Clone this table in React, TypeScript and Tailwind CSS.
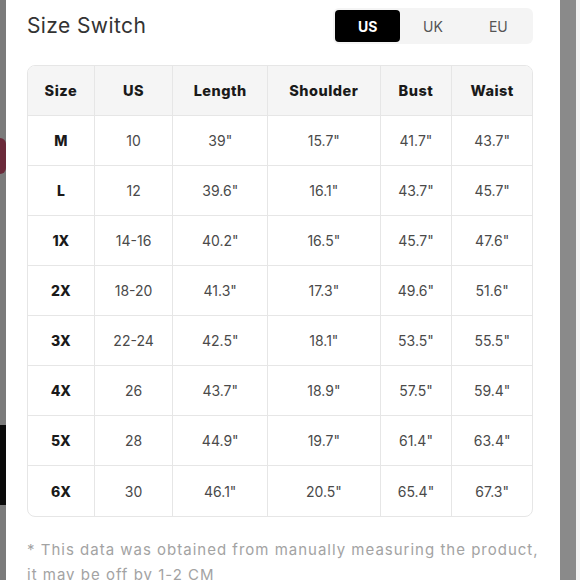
import React from 'react';

const headers = ['Size', 'US', 'Length', 'Shoulder', 'Bust', 'Waist'];

const rows = [
  ['M', '10', '39"', '15.7"', '41.7"', '43.7"'],
  ['L', '12', '39.6"', '16.1"', '43.7"', '45.7"'],
  ['1X', '14-16', '40.2"', '16.5"', '45.7"', '47.6"'],
  ['2X', '18-20', '41.3"', '17.3"', '49.6"', '51.6"'],
  ['3X', '22-24', '42.5"', '18.1"', '53.5"', '55.5"'],
  ['4X', '26', '43.7"', '18.9"', '57.5"', '59.4"'],
  ['5X', '28', '44.9"', '19.7"', '61.4"', '63.4"'],
  ['6X', '30', '46.1"', '20.5"', '65.4"', '67.3"'],
];

const colWidths = ['w-[67px]', 'w-[79px]', 'w-[95px]', 'w-[113px]', 'w-[72px]', 'w-[80px]'];

const UnitToggle: React.FC = () => {
  const units = ['US', 'UK', 'EU'];
  return (
    <div className="flex items-center bg-[#f4f4f4] rounded-md p-[2px] h-[36px] w-[200px]">
      {units.map((u, i) => (
        <button
          key={u}
          className={`flex-1 h-full rounded-[4px] text-[14px] ${
            i === 0 ? 'bg-black text-white font-bold' : 'text-[#555]'
          }`}
        >
          {u}
        </button>
      ))}
    </div>
  );
};

export default function App() {
  return (
    <div
      className="w-[580px] h-[580px] overflow-hidden flex bg-white"
      style={{ fontFamily: 'Inter, "Noto Sans", sans-serif' }}
    >
      {/* page behind the sheet */}
      <div className="w-[6px] shrink-0 flex flex-col bg-[#7b7b7b]">
        <div className="h-[138px]" />
        <div className="h-[36px] bg-[#6b2a3a] rounded-r-full" />
        <div className="h-[251px]" />
        <div className="h-[80px] bg-[#0a0a0a]" />
        <div className="flex-1" />
      </div>

      {/* sheet */}
      <div className="w-[554px] shrink-0 pl-[21px] pt-[8px]">
        <div className="w-[506px] flex items-center justify-between">
          <h2 className="text-[21px] text-[#333] tracking-[0.4px]">Size Switch</h2>
          <UnitToggle />
        </div>

        <div className="mt-[21px] w-[506px] border border-[#e6e6e6] rounded-lg overflow-hidden">
          <div className="flex h-[50px] bg-[#f5f5f5] border-b border-[#e6e6e6]">
            {headers.map((h, i) => (
              <div
                key={h}
                className={`${colWidths[i]} flex items-center justify-center text-[14.5px] tracking-[0.5px] font-extrabold text-[#1a1a1a] ${
                  i < 5 ? 'border-r border-[#e6e6e6]' : ''
                }`}
              >
                {h}
              </div>
            ))}
          </div>
          {rows.map((r, ri) => (
            <div
              key={r[0]}
              className={`flex h-[50px] ${ri < rows.length - 1 ? 'border-b border-[#e6e6e6]' : ''}`}
            >
              {r.map((c, ci) => (
                <div
                  key={ci}
                  className={`${colWidths[ci]} flex items-center justify-center text-[14px] ${
                    ci === 0 ? 'font-extrabold text-[#1a1a1a]' : 'text-[#4a4a4a]'
                  } ${ci < 5 ? 'border-r border-[#e6e6e6]' : ''}`}
                >
                  {c}
                </div>
              ))}
            </div>
          ))}
        </div>

        <p className="mt-[20px] w-[515px] text-[15px] tracking-[1px] leading-[25px] text-[#a3a3a3]">
          * This data was obtained from manually measuring the product, it may be off by 1-2 CM
        </p>
      </div>

      {/* scrollbar */}
      <div className="w-[16px] shrink-0 bg-[#8a8a8a]" />
      <div className="flex-1 bg-[#f2f2f2]" />
    </div>
  );
}
